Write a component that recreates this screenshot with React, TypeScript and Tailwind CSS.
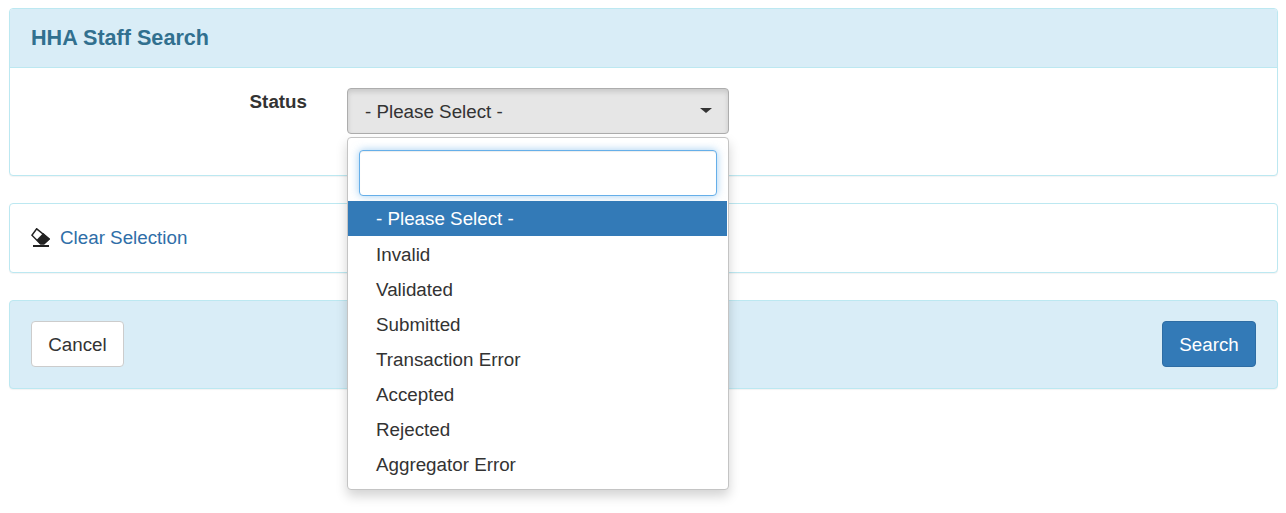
export default function App() {
  const items = ["Invalid", "Validated", "Submitted", "Transaction Error", "Accepted", "Rejected", "Aggregator Error"];
  return (
    <div className="min-h-[513px] bg-white pt-2 pl-[9px] pr-2 font-['Liberation_Sans',Arial,sans-serif] text-[18.8px] leading-[25px] text-[#333]">
      <section className="h-[168px] rounded border border-[#bce8f1] bg-white shadow-[0_1px_1px_rgba(0,0,0,0.05)]">
        <header className="flex h-[59px] items-center rounded-t-[3px] border-b border-[#bce8f1] bg-[#d9edf7] pl-[21px] pb-px">
          <h1 className="text-[21.6px] font-bold leading-6 text-[#31708f]">HHA Staff Search</h1>
        </header>
        <div className="flex pt-5">
          <label className="w-[297px] pt-px text-right font-bold">Status</label>
          <div className="relative ml-10 w-[382px]">
            <button className="flex h-[46px] w-full items-center justify-between rounded border border-[#adadad] bg-[#e6e6e6] pl-[17px] pr-[16px] text-[18.8px] shadow-[inset_0_3px_5px_rgba(0,0,0,0.125)]">
              <span>- Please Select -</span>
              <span className="mb-[2px] h-0 w-0 border-x-[6px] border-t-[5px] border-x-transparent border-t-[#333]"></span>
            </button>
            <div className="absolute top-[49px] left-0 z-10 h-[353px] w-[382px] rounded border border-[#c4c4c4] bg-white pt-3 shadow-[0_6px_12px_rgba(0,0,0,0.175)]">
              <div className="mx-[11px] h-[46px] rounded border border-[#66afe9] bg-white shadow-[inset_0_1px_1px_rgba(0,0,0,0.075),0_0_8px_rgba(102,175,233,0.6)]"></div>
              <ul className="mt-[5px] mr-px">
                <li className="flex h-[35px] items-center bg-[#337ab7] pl-7 text-white">- Please Select -</li>
                {items.map((t) => (
                  <li key={t} className="flex h-[35px] items-center pl-7 pt-px">{t}</li>
                ))}
              </ul>
            </div>
          </div>
        </div>
      </section>

      <section className="mt-[27px] flex h-[70px] items-center rounded border border-[#bce8f1] bg-white pl-[21px] pb-px shadow-[0_1px_1px_rgba(0,0,0,0.05)]">
        <svg width="19" height="19" viewBox="0 0 19 19" className="mr-[10px]" aria-hidden="true">
          <path d="M5.7 0.8 L0.9 7.2 L9.4 15.8 H13 L18.2 11 Z" fill="#fff" stroke="#222" strokeWidth="1.5" strokeLinejoin="miter" />
          <path d="M5.7 11.7 L12.3 5 L19 11 L13 16.5 H9.5 Z" fill="#222" />
          <path d="M2 18 H18" stroke="#222" strokeWidth="2" />
        </svg>
        <a className="text-[#2f6ea8]">Clear Selection</a>
      </section>

      <footer className="mt-[27px] flex h-[89px] items-center justify-between rounded border border-[#bce8f1] bg-[#d9edf7] px-[21px] pb-px shadow-[0_1px_1px_rgba(0,0,0,0.05)]">
        <button className="h-[46px] w-[93px] rounded border border-[#ccc] bg-white text-[18.8px] text-[#333]">Cancel</button>
        <button className="h-[46px] w-[94px] rounded border border-[#2e6da4] bg-[#337ab7] text-[18.8px] text-white">Search</button>
      </footer>
    </div>
  );
}
